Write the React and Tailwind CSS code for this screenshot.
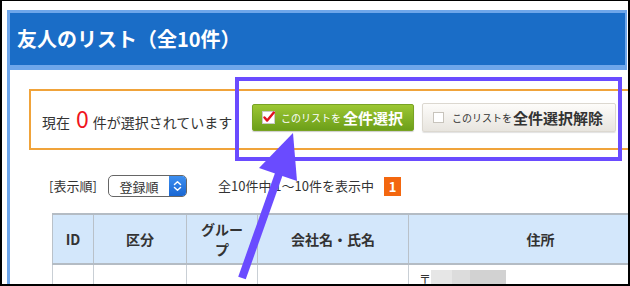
const jp = { fontFamily: '"Noto Sans CJK JP", "Noto Sans", sans-serif' };

const CheckOn = () => (
  <svg width="13" height="13" viewBox="0 0 13 13" className="shrink-0">
    <rect x="0.5" y="0.5" width="12" height="12" fill="#fff" stroke="#c9c9c9" />
    <path d="M2.5 6.5 L5.2 9.6 L11.8 1.6" fill="none" stroke="#e0121d" strokeWidth="2.4" strokeLinecap="round" strokeLinejoin="round" />
  </svg>
);

const CheckOff = () => (
  <span className="shrink-0 w-[11px] h-[11px] bg-white border border-[#c8c4bc]" />
);

const columns = [
  { label: 'ID' },
  { label: '区分' },
  { label: 'グルー\nプ' },
  { label: '会社名・氏名' },
  { label: '住所' },
];

export default function App() {
  return (
    <div
      className="relative w-[630px] h-[286px] overflow-hidden bg-white border-2 border-t border-black text-[#333]"
      style={jp}
    >
      <div className="ml-[5px] mr-px mt-[9px] h-[300px] border-l-[3px] border-[#6ea6ea]">
        {/* header */}
        <div className="h-[60px] bg-[#1a6dc7] border-t-[3px] border-b-[5px] border-r-2 border-[#6ea6ea] flex items-center pl-[7px]">
          <h1 className="text-white text-[20px] font-bold leading-none">友人のリスト（全10件）</h1>
        </div>

        {/* selection box */}
        <div className="ml-[19px] mt-[19px] w-[620px] h-[61px] border-2 border-[#f0a33a] flex items-center">
          <div className="ml-[11px] w-[194px] flex items-baseline text-[14px] whitespace-nowrap">
            <span>現在</span>
            <span className="ml-[6px] mr-[4px] text-[23px] leading-none text-[#f0141c]">0</span>
            <span>件が選択されています</span>
          </div>
          <button className="ml-[16px] mb-[4px] w-[162px] h-[27px] flex items-center pl-[9px] rounded-[2px] border border-[#78a324] bg-gradient-to-b from-[#9cc733] to-[#6c9f19] text-white shadow-[0_1px_1px_rgba(0,0,0,0.2)]">
            <CheckOn />
            <span className="ml-[6px] text-[10px] leading-none">このリストを</span>
            <span className="ml-[2px] text-[15px] font-bold leading-none">全件選択</span>
          </button>
          <button className="ml-[8px] mb-[4px] w-[194px] h-[29px] flex items-center pl-[10px] rounded-[2px] border border-[#dcd8d0] bg-gradient-to-b from-[#fdfcfa] to-[#e8e5df] text-[#333] shadow-[0_1px_1px_rgba(0,0,0,0.12)]">
            <CheckOff />
            <span className="ml-[8px] text-[10px] leading-none">このリストを</span>
            <span className="ml-[1px] text-[15px] font-bold leading-none">全件選択解除</span>
          </button>
        </div>

        {/* sort row */}
        <div className="ml-[39px] mt-[25px] flex items-center h-[22px] text-[13px]">
          <span className="w-[59px] whitespace-nowrap">[表示順]</span>
          <div className="w-[79px] h-[22px] flex rounded-[5px] border border-[#666] overflow-hidden bg-white">
            <span className="flex-1 flex items-center justify-center text-[13px] leading-none">登録順</span>
            <span className="w-[17px] bg-gradient-to-b from-[#3d8ff0] to-[#1866d2] flex items-center justify-center">
              <svg width="9" height="12" viewBox="0 0 9 12">
                <path d="M1.5 4.5 L4.5 1.8 L7.5 4.5 M1.5 7.5 L4.5 10.2 L7.5 7.5" fill="none" stroke="#fff" strokeWidth="1.5" strokeLinecap="round" strokeLinejoin="round" />
              </svg>
            </span>
          </div>
          <span className="ml-[31px] whitespace-nowrap">全10件中 1〜10件を表示中</span>
          <span className="ml-[10px] w-[17px] h-[19px] bg-[#f3670f] text-white text-[13px] font-bold flex items-center justify-center leading-none">1</span>
        </div>

        {/* table */}
        <div className="ml-[42px] mt-[16px] w-[620px]">
          <div className="grid grid-cols-[41px_93px_71px_151px_1fr] h-[52px] bg-[#d3e7fb] border-t-2 border-b-2 border-[#b4bcc4]">
            {columns.map((c, i) => (
              <div
                key={i}
                className="border-l border-[#b9c1c9] flex items-center justify-center text-center text-[14px] font-bold leading-[20px] whitespace-pre-line"
              >
                {c.label}
              </div>
            ))}
          </div>
          <div className="grid grid-cols-[41px_93px_71px_151px_1fr] h-[40px]">
            {columns.map((c, i) => (
              <div key={i} className="border-l border-[#c9cfd5] flex items-start">
                {i === 4 && (
                  <div className="mt-[5px] ml-[10px] flex items-start">
                    <span className="text-[12px] leading-none mt-[3px]">〒</span>
                    <span className="w-[21px] h-[20px] bg-[#e6e6e6]" />
                    <span className="w-[18px] h-[20px] bg-[#dcdcdc]" />
                    <span className="w-[36px] h-[20px] bg-[#d2d2d2]" />
                  </div>
                )}
              </div>
            ))}
          </div>
        </div>
      </div>

      {/* annotation overlay */}
      <svg className="absolute left-[-2px] top-[-1px] pointer-events-none" width="630" height="286" viewBox="0 0 630 286">
        <rect x="237" y="79" width="383" height="80" fill="none" stroke="#6a4bff" strokeWidth="4" />
        <line x1="242" y1="278" x2="281" y2="168" stroke="#6a4bff" strokeWidth="8" />
        <polygon points="293,133 259,168 297,181" fill="#6a4bff" />
      </svg>
    </div>
  );
}
